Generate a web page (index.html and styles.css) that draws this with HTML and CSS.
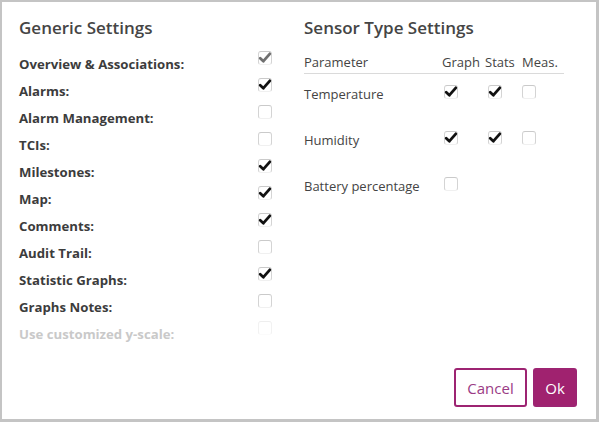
FILE: index.html
```html
<!DOCTYPE html>
<html>
<head>
<meta charset="utf-8">
<link rel="stylesheet" href="styles.css">
</head>
<body>
<div class="dialog">
  <div class="columns">
    <section class="generic">
      <h2 class="title">Generic Settings</h2>
      <div class="row"><span class="label">Overview &amp; Associations:</span><span class="cb checked disabled"><svg viewBox="0 0 14 14"><path d="M2.2 7.2 L5.4 10.2 L11.8 2.8"/></svg></span></div>
      <div class="row"><span class="label">Alarms:</span><span class="cb checked"><svg viewBox="0 0 14 14"><path d="M2.2 7.2 L5.4 10.2 L11.8 2.8"/></svg></span></div>
      <div class="row"><span class="label">Alarm Management:</span><span class="cb"></span></div>
      <div class="row"><span class="label">TCIs:</span><span class="cb"></span></div>
      <div class="row"><span class="label">Milestones:</span><span class="cb checked"><svg viewBox="0 0 14 14"><path d="M2.2 7.2 L5.4 10.2 L11.8 2.8"/></svg></span></div>
      <div class="row"><span class="label">Map:</span><span class="cb checked"><svg viewBox="0 0 14 14"><path d="M2.2 7.2 L5.4 10.2 L11.8 2.8"/></svg></span></div>
      <div class="row"><span class="label">Comments:</span><span class="cb checked"><svg viewBox="0 0 14 14"><path d="M2.2 7.2 L5.4 10.2 L11.8 2.8"/></svg></span></div>
      <div class="row"><span class="label">Audit Trail:</span><span class="cb"></span></div>
      <div class="row"><span class="label">Statistic Graphs:</span><span class="cb checked"><svg viewBox="0 0 14 14"><path d="M2.2 7.2 L5.4 10.2 L11.8 2.8"/></svg></span></div>
      <div class="row"><span class="label">Graphs Notes:</span><span class="cb"></span></div>
      <div class="row muted"><span class="label">Use customized y-scale:</span><span class="cb faint"></span></div>
    </section>
    <section class="sensor">
      <h2 class="title">Sensor Type Settings</h2>
      <div class="thead">
        <span class="c-param">Parameter</span>
        <span class="c-graph">Graph</span>
        <span class="c-stats">Stats</span>
        <span class="c-meas">Meas.</span>
      </div>
      <div class="trow">
        <span class="c-param">Temperature</span>
        <span class="c-graph"><span class="cb checked"><svg viewBox="0 0 14 14"><path d="M2.2 7.2 L5.4 10.2 L11.8 2.8"/></svg></span></span>
        <span class="c-stats"><span class="cb checked"><svg viewBox="0 0 14 14"><path d="M2.2 7.2 L5.4 10.2 L11.8 2.8"/></svg></span></span>
        <span class="c-meas"><span class="cb"></span></span>
      </div>
      <div class="trow">
        <span class="c-param">Humidity</span>
        <span class="c-graph"><span class="cb checked"><svg viewBox="0 0 14 14"><path d="M2.2 7.2 L5.4 10.2 L11.8 2.8"/></svg></span></span>
        <span class="c-stats"><span class="cb checked"><svg viewBox="0 0 14 14"><path d="M2.2 7.2 L5.4 10.2 L11.8 2.8"/></svg></span></span>
        <span class="c-meas"><span class="cb"></span></span>
      </div>
      <div class="trow">
        <span class="c-param">Battery percentage</span>
        <span class="c-graph"><span class="cb"></span></span>
      </div>
    </section>
  </div>
  <div class="actions">
    <button class="btn btn-outline">Cancel</button>
    <button class="btn btn-fill">Ok</button>
  </div>
</div>
</body>
</html>
```
FILE: styles.css
```css
* { box-sizing: border-box; }
html, body { margin: 0; padding: 0; background: #fff; }
body { font-family: "Open Sans", "Liberation Sans", sans-serif; color: #3a3a3a; }

.dialog {
  width: 599px;
  height: 422px;
  border-style: solid;
  border-color: #c4c4c4;
  border-width: 2px 3px 3px 2px;
  display: flex;
  flex-direction: column;
}

.columns {
  display: flex;
  padding: 14px 0 0 17px;
  flex: 1;
}

.generic { width: 285px; }
.sensor { width: 262px; }

.title {
  margin: 0;
  font-size: 17px;
  line-height: 24px;
  font-weight: 600;
  color: #454545;
  height: 34px;
}

.row {
  height: 27px;
  display: flex;
  align-items: center;
  position: relative;
}
.row .label {
  width: 239px;
  font-size: 13.2px;
  font-weight: 700;
  color: #3c3c3c;
}
.row .cb { align-self: flex-start; margin-top: 1px; }
.row.muted .label { color: #c9c9c9; }

.cb {
  width: 14px;
  height: 14px;
  border-radius: 3px;
  border: 1px solid;
  border-color: #cacaca #d4d4d4 #f0f0f0 #d4d4d4;
  display: inline-block;
  position: relative;
  background: #fff;
}
.cb svg {
  position: absolute;
  left: -1px;
  top: -1px;
  width: 14px;
  height: 14px;
  overflow: visible;
}
.cb svg path {
  fill: none;
  stroke: #111;
  stroke-width: 2.8;
  stroke-linecap: round;
  stroke-linejoin: round;
}
.cb.disabled svg path { stroke: #707070; }
.cb.faint { border-color: #eee #f2f2f2 #fbfbfb #f2f2f2; }

.thead, .trow {
  display: flex;
  font-size: 13px;
  color: #444;
}
.thead {
  width: 260px;
  height: 24px;
  border-bottom: 1px solid #dadada;
  align-items: flex-start;
  padding-top: 3px;
}
.trow {
  height: 46px;
  align-items: center;
}
.c-param { width: 138px; }
.c-graph { width: 43px; }
.c-stats { width: 37px; }
.c-meas { width: 42px; }
.trow .c-graph { padding-left: 2px; }
.trow .c-stats { padding-left: 3px; }
.trow .c-param { margin-top: -6px; }
.trow .cb { margin-top: -10px; display: block; }

.actions {
  display: flex;
  justify-content: flex-end;
  gap: 6px;
  padding: 0 19px 12px 0;
}
.btn {
  height: 39px;
  border-radius: 3px;
  font-family: "Open Sans", "Liberation Sans", sans-serif;
  font-size: 15px;
  border: 2px solid #9d2472;
  padding: 0;
}
.btn-outline { width: 73px; background: #fff; color: #9a3b85; }
.btn-fill { width: 44px; background: #a0226f; color: #fff; }
```
